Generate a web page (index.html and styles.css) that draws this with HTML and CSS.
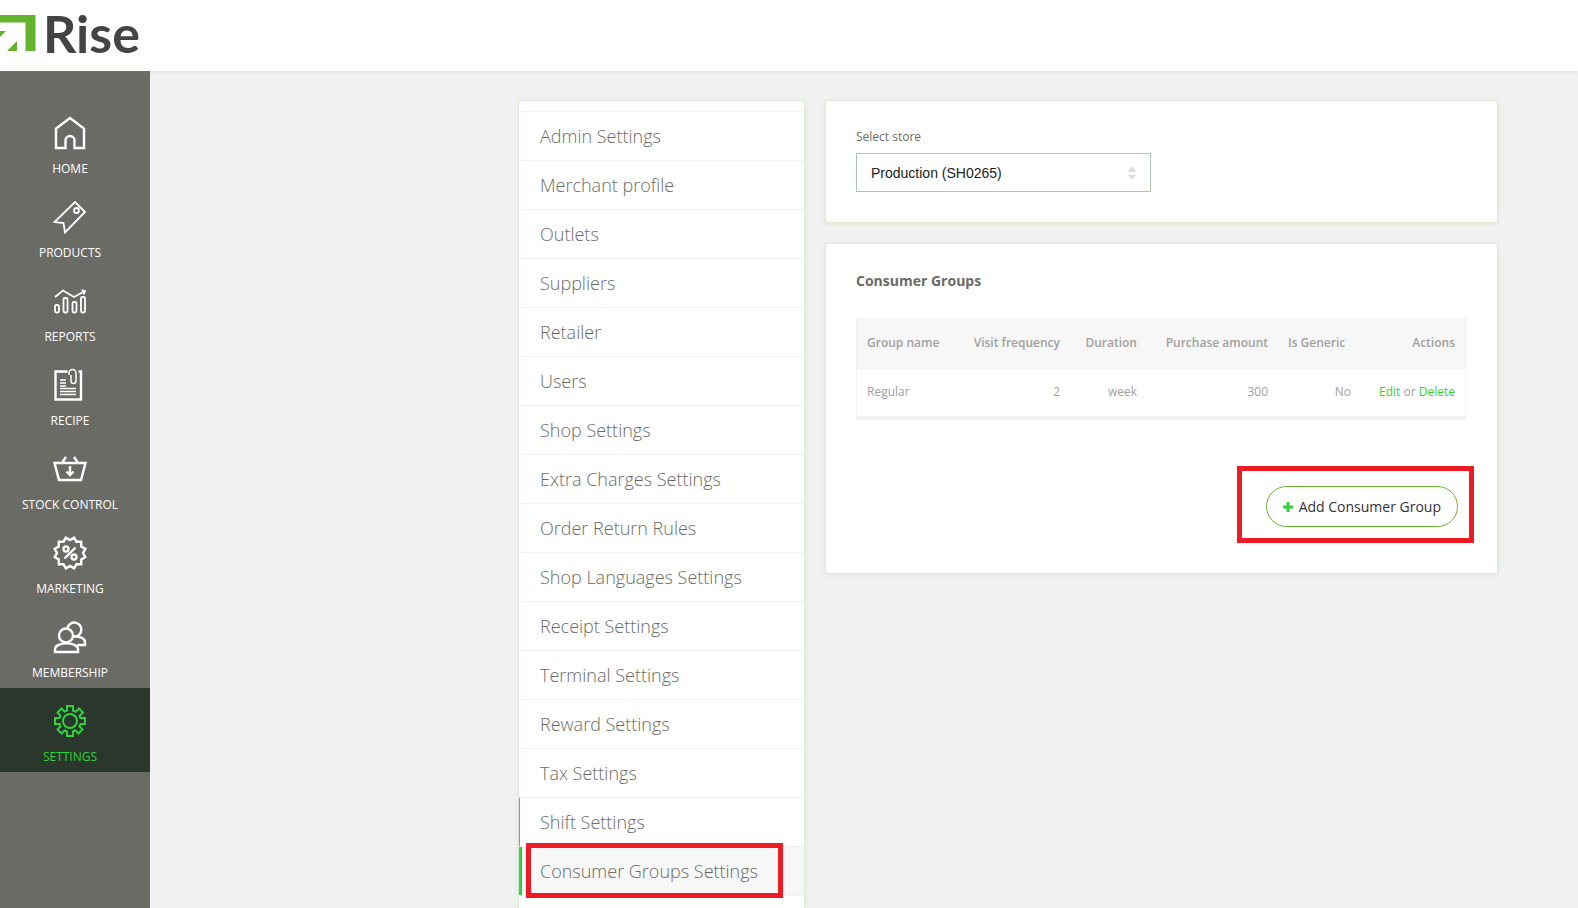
FILE: index.html
```
<!DOCTYPE html>
<html lang="en">
<head>
    <meta charset="UTF-8">
    <meta name="viewport" content="width=device-width, initial-scale=1.0">
    <title>Rise - Consumer Groups Settings</title>
    <link rel="stylesheet" href="styles.css">
</head>
<body>

<header class="header">
    <a class="logo" href="#">
        <svg width="36" height="36" viewBox="0 0 36 36" fill="#64b32c">
            <path d="M0 0H35.500V36H25.500V7.500H0Z"/>
            <path d="M0 16H6L0 22Z"/>
            <path d="M7 36L17 26V36Z"/>
        </svg>
        <span>Rise</span>
    </a>
</header>

<div class="page">
    <nav class="sidebar">
        <a href="#">
            <svg viewBox="0 0 34 34"><path d="M3 32V12.500L17 2L31 12.500V32H21.500V24.500a4.500 4.500 0 0 0-9 0V32Z"/></svg>
            <span>HOME</span>
        </a>
        <a href="#">
            <svg class="thin" viewBox="0 0 34 34"><path d="M22 2L32 12L12 32.500L10.500 23L1.500 22Z"/><circle cx="23.500" cy="10.500" r="2.500"/></svg>
            <span>PRODUCTS</span>
        </a>
        <a href="#">
            <svg class="thin" viewBox="0 0 34 34"><path d="M2 13L10 6.500L21 13L31 7.500M28.500 6L32 7L30.500 10.500"/><rect x="2" y="21" width="4" height="7.500" rx="1.500"/><rect x="10.500" y="14" width="4" height="14.500" rx="1.500"/><rect x="19.500" y="18" width="4" height="10.500" rx="1.500"/><rect x="28" y="13" width="4" height="15.500" rx="1.500"/></svg>
            <span>REPORTS</span>
        </a>
        <a href="#">
            <svg viewBox="0 0 34 34"><path d="M14.500 3.500H2.500V31.500H28V3.500H25.500"/><path class="line" d="M7 12H13M7 15H13M7 18H13M7 20.500H23M7 23.500H23M7 26.500H23"/><path class="clip" d="M16 7V5a3.500 3.500 0 0 1 7 0V13a2.500 2.500 0 0 1-5 0V7"/></svg>
            <span>RECIPE</span>
        </a>
        <a href="#">
            <svg viewBox="0 0 34 34"><path d="M1.500 11H32.500L28 28H6ZM9.500 10L13 5M24.500 10L21 5M17 14V22M13.500 19.500L17 23L20.500 19.500"/></svg>
            <span>STOCK CONTROL</span>
        </a>
        <a href="#">
            <svg viewBox="0 0 34 34"><path d="M17.0 4.000L21.100 1.700L23.500 5.700L28.200 5.800L28.300 10.500L32.300 12.900L30.000 17.000L32.300 21.100L28.300 23.500L28.200 28.200L23.500 28.300L21.100 32.300L17.000 30.000L12.900 32.300L10.500 28.300L5.800 28.200L5.700 23.500L1.700 21.100L4.000 17.000L1.700 12.900L5.700 10.500L5.800 5.800L10.500 5.700L12.900 1.700Z"/><path d="M11.500 22.500L22.500 11.500"/><circle cx="13" cy="13" r="2.500"/><circle cx="21" cy="21" r="2.500"/></svg>
            <span>MARKETING</span>
        </a>
        <a href="#">
            <svg viewBox="0 0 34 34"><circle cx="13" cy="15.500" r="7"/><path d="M2 32V29C2 21.500 25 21.500 25 29V32ZM14.500 8a7 7 0 1 1 7 8.500M20.500 16.500C27 16 32 18.500 32 22V25H24.500"/></svg>
            <span>MEMBERSHIP</span>
        </a>
        <a href="#" class="active">
            <svg viewBox="0 0 34 34"><path d="M14 2H20V6.500L22.800 7.700L26 4.500L30 8.500L26.500 12L27.500 14H32V20H27.500L26.500 22.500L29.500 25.500L25.500 29.500L22.500 26.500L20 27.500V32H14V27.500L11.500 26.500L8.500 29.500L4.500 25.500L7.500 22.500L6.500 20H2V14H6.500L7.500 12L4.500 8.500L8.500 4.500L11.500 7.500L14 6.500Z"/><circle cx="17" cy="17" r="7"/></svg>
            <span>SETTINGS</span>
        </a>
    </nav>

    <main class="content">
        <nav class="menu">
            <a href="#">Admin Settings</a>
            <a href="#">Merchant profile</a>
            <a href="#">Outlets</a>
            <a href="#">Suppliers</a>
            <a href="#">Retailer</a>
            <a href="#">Users</a>
            <a href="#">Shop Settings</a>
            <a href="#">Extra Charges Settings</a>
            <a href="#">Order Return Rules</a>
            <a href="#">Shop Languages Settings</a>
            <a href="#">Receipt Settings</a>
            <a href="#">Terminal Settings</a>
            <a href="#">Reward Settings</a>
            <a href="#">Tax Settings</a>
            <a href="#" class="visited">Shift Settings</a>
            <a href="#" class="current">Consumer Groups Settings</a>
        </nav>

        <div class="panels">
            <section class="panel">
                <label for="store">Select store</label>
                <div class="select">
                    <select id="store">
                        <option>Production (SH0265)</option>
                    </select>
                    <svg width="8" height="14" viewBox="0 0 8 14" fill="#dcdcdc"><path d="M4 0L8 6H0ZM4 14L0 9H8Z"/></svg>
                </div>
            </section>

            <section class="panel">
                <h2>Consumer Groups</h2>
                <table>
                    <thead>
                        <tr>
                            <th class="name">Group name</th>
                            <th class="frequency">Visit frequency</th>
                            <th class="duration">Duration</th>
                            <th class="amount">Purchase amount</th>
                            <th class="generic">Is Generic</th>
                            <th class="actions">Actions</th>
                        </tr>
                    </thead>
                    <tbody>
                        <tr>
                            <td class="name">Regular</td>
                            <td>2</td>
                            <td>week</td>
                            <td>300</td>
                            <td>No</td>
                            <td><a href="#">Edit</a> or <a href="#">Delete</a></td>
                        </tr>
                    </tbody>
                </table>
                <div class="buttons">
                    <button type="button" class="add">
                        <svg width="10" height="10" viewBox="0 0 10 10"><path d="M5 0V10M0 5H10" stroke="#2fd13c" stroke-width="3"/></svg>
                        Add Consumer Group
                    </button>
                </div>
            </section>
        </div>
    </main>
</div>

</body>
</html>
```
FILE: styles.css
```
* {
    box-sizing: border-box;
}
body {
    font-family: "Open Sans", sans-serif;
    background-color: #f1f1f1;
    color: #6b6b66;
    margin: 0;
    min-height: 100vh;
    display: flex;
    flex-direction: column;
}
a {
    color: #2fd13c;
    text-decoration: none;
}
.header {
    height: 71px;
    padding-top: 4px;
    background-color: #fff;
    box-shadow: 0 1px 4px rgba(100, 179, 44, 0.15);
    position: relative;
}
.logo {
    display: flex;
    align-items: center;
    gap: 7px;
    height: 58px;
    font-family: Lato, sans-serif;
    font-size: 52px;
    line-height: 56px;
    font-weight: bold;
    color: #444;
}
.page {
    flex: 1;
    display: flex;
}

/* Left navigation */
.sidebar {
    width: 150px;
    padding-top: 29px;
    background-color: #6b6b66;
}
.sidebar a {
    display: flex;
    flex-direction: column;
    align-items: center;
    height: 84px;
    padding-top: 16px;
    padding-right: 10px;
    color: #fff;
    font-size: 12px;
    line-height: 18px;
}
.sidebar svg {
    width: 34px;
    height: 34px;
    margin-bottom: 10px;
    fill: none;
    stroke: currentColor;
    stroke-width: 2.4;
}
.sidebar .thin {
    stroke-width: 1.8;
}
.sidebar .line,
.sidebar .clip {
    stroke-width: 1.5;
}
.sidebar .active {
    background-color: #2b362c;
    color: #2fd13c;
}
.sidebar .active svg {
    stroke-width: 2;
}

/* Settings menu and panels */
.content {
    flex: 1;
    max-width: 1060px;
    margin-left: auto;
    padding: 29px 80px 0 0;
    display: flex;
    gap: 20px;
}
.menu {
    width: 287px;
    padding-top: 10px;
    background-color: #fff;
    border: 1px solid #dfe9d8;
    border-bottom: none;
    border-radius: 3px 3px 0 0;
    box-shadow: 0 1px 4px rgba(100, 179, 44, 0.1);
}
.menu a {
    display: block;
    height: 49px;
    padding-left: 21px;
    border-top: 1px solid #f1f1f1;
    color: #6b6b66;
    font-size: 18px;
    font-weight: 300;
    line-height: 48px;
}
.menu .visited {
    box-shadow: inset 1px 0 #2fd13c;
}
.menu .current {
    height: 50px;
    border-bottom: 1px solid #f1f1f1;
    background-color: #f7f7f7;
    box-shadow: inset 3px 0 #2fd13c;
    position: relative;
}
.panels {
    flex: 1;
}
.panel {
    margin-bottom: 20px;
    padding: 30px 31px 30px 30px;
    background-color: #fff;
    border: 1px solid #dfe9d8;
    border-radius: 3px;
    box-shadow: 0 1px 4px rgba(100, 179, 44, 0.15);
}
.panel label {
    display: block;
    padding-bottom: 10px;
    font-size: 12px;
    line-height: 12px;
}
.select {
    width: 295px;
    position: relative;
}
.select select {
    display: block;
    width: 100%;
    height: 39px;
    padding: 0 14px;
    border: 1px solid #b0c6b2;
    border-radius: 0;
    background-color: #fff;
    color: #222;
    font-family: "Liberation Sans", sans-serif;
    font-size: 14px;
    appearance: none;
}
.select svg {
    position: absolute;
    top: 13px;
    right: 15px;
    pointer-events: none;
}
h2 {
    margin: 0 0 30px;
    font-size: 14px;
    line-height: 14px;
}
table {
    width: 100%;
    border: 1px solid #f1f1f1;
    border-top: none;
    border-bottom-width: 4px;
    border-spacing: 0;
    table-layout: fixed;
    color: #a0a09e;
    font-size: 12px;
}
th, td {
    padding: 0 10px 2px;
    text-align: right;
    white-space: nowrap;
}
td {
    height: 47px;
}
th {
    height: 51px;
    background-color: #f7f7f7;
    border-bottom: 1px solid #f1f1f1;
    font-weight: 600;
}
.name {
    text-align: left;
}
.frequency {
    width: 107px;
}
.duration {
    width: 77px;
}
.amount {
    width: 131px;
}
.generic {
    width: 83px;
    text-align: left;
}
.actions {
    width: 104px;
}
.buttons {
    display: flex;
    justify-content: flex-end;
    padding: 66px 8px 16px 0;
}
.add {
    display: flex;
    align-items: center;
    gap: 6px;
    height: 41px;
    padding: 0 16px;
    border: 1px solid #64b32c;
    border-radius: 21px;
    background-color: #fff;
    color: #333;
    font-family: inherit;
    font-size: 14px;
    position: relative;
}

/* Red highlight boxes */
.add::after,
.current::after {
    content: "";
    position: absolute;
    border: 5px solid #ed1c24;
}
.add::after {
    inset: -21px -17px -17px -30px;
}
.current::after {
    inset: -4px 21px -3px 7px;
}
```
